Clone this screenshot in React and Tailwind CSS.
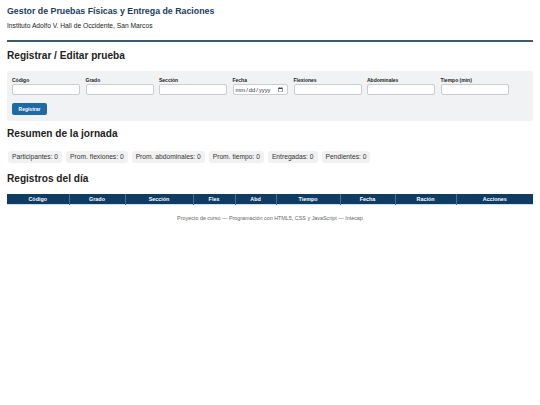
import React from 'react';

const fields = [
  { label: 'Código', w: 'w-[68px]' },
  { label: 'Grado', w: 'w-[68px]' },
  { label: 'Sección', w: 'w-[68px]' },
  { label: 'Fecha', w: 'w-[55.5px]', type: 'date' },
  { label: 'Flexiones', w: 'w-[68px]' },
  { label: 'Abdominales', w: 'w-[68px]' },
  { label: 'Tiempo (min)', w: 'w-[68px]' },
];

const stats = [
  'Participantes: 0',
  'Prom. flexiones: 0',
  'Prom. abdominales: 0',
  'Prom. tiempo: 0',
  'Entregadas: 0',
  'Pendientes: 0',
];

const columns = [
  { name: 'Código', w: 'w-[62px]' },
  { name: 'Grado', w: 'w-[56px]' },
  { name: 'Sección', w: 'w-[68px]' },
  { name: 'Flex', w: 'w-[42px]' },
  { name: 'Abd', w: 'w-[41px]' },
  { name: 'Tiempo', w: 'w-[64px]' },
  { name: 'Fecha', w: 'w-[55px]' },
  { name: 'Ración', w: 'w-[61px]' },
  { name: 'Acciones', w: 'w-[77px]' },
];

export default function App() {
  return (
    <div className="min-h-screen bg-white px-[7px] pt-[6px] text-[#222] font-['Liberation_Sans',Arial,sans-serif]">
      <header className="border-b-2 border-[#3f5670] pb-[10px]">
        <h1 className="text-[8.8px] leading-[11px] font-bold text-[#1d3b5e]">
          Gestor de Pruebas Físicas y Entrega de Raciones
        </h1>
        <p className="mt-[5px] text-[6.7px] leading-[8px] text-[#222]">
          Instituto Adolfo V. Hall de Occidente, San Marcos
        </p>
      </header>

      <h2 className="mt-[8px] text-[10.1px] leading-[12px] font-bold">Registrar / Editar prueba</h2>

      <section className="mt-[9px] rounded-[3px] bg-[#f1f2f4] px-[5px] pt-[6px] pb-[6px] text-[5px] leading-[6px]">
        <div className="flex flex-wrap gap-x-[5.5px]">
          {fields.map((f) => (
            <label key={f.label} className="flex flex-col">
              <span className="text-[5px] leading-[6px] font-bold mb-[1px]">{f.label}</span>
              {f.type === 'date' ? (
                <input
                  type="date"
                  className={`${f.w} h-[11px] rounded-[2px] border border-[#c9ccd1] bg-white px-[1px] text-[5.8px] text-[#333]`}
                />
              ) : (
                <input
                  type="text"
                  className={`${f.w} h-[11px] rounded-[2px] border border-[#c9ccd1] bg-white`}
                />
              )}
            </label>
          ))}
        </div>
        <button className="mt-[8px] block h-[12px] w-[35px] rounded-[2px] bg-[#1f6aa5] text-[5px] leading-[12px] font-bold text-white">
          Registrar
        </button>
      </section>

      <h2 className="mt-[7px] text-[10.1px] leading-[12px] font-bold">Resumen de la jornada</h2>

      <div className="mt-[11px] flex flex-wrap gap-[4px] pl-[1px]">
        {stats.map((s) => (
          <span key={s} className="h-[12px] rounded-[3px] bg-[#f1f1f2] px-[4px] text-[6.7px] leading-[12px] text-[#333]">
            {s}
          </span>
        ))}
      </div>

      <h2 className="mt-[10px] text-[10.1px] leading-[12px] font-bold">Registros del día</h2>

      <table className="mt-[9px] w-full table-fixed border-collapse border-b border-[#cfe0ee]">
        <thead>
          <tr className="bg-[#0f3c63]">
            {columns.map((c) => (
              <th
                key={c.name}
                className={`${c.w} h-[10px] border-l border-[#4a6c8e] first:border-l-0 p-0 text-center text-[5.4px] leading-[10px] font-bold text-white`}
              >
                {c.name}
              </th>
            ))}
          </tr>
        </thead>
        <tbody />
      </table>

      <footer className="mt-[10px] text-center text-[5.4px] leading-[6px] text-[#666]">
        Proyecto de curso — Programación con HTML5, CSS y JavaScript — Intecap
      </footer>
    </div>
  );
}
